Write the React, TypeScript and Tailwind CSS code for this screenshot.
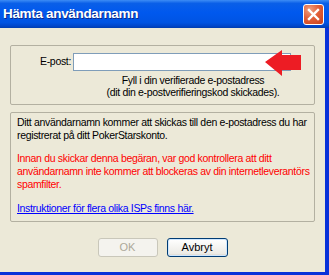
import React from 'react';

const font = { fontFamily: '"Liberation Sans", Arial, sans-serif' };

const TitleBar: React.FC = () => (
  <div className="relative flex h-[28px] items-center bg-[linear-gradient(to_bottom,#3d8cf5_0%,#0a5fe8_12%,#0058ee_45%,#0054e3_80%,#0047cc_92%,#003db0_100%)] pl-[3px] pr-[5px]">
    <span className="flex-1 text-[13.5px] font-bold text-white [text-shadow:1px_1px_0_#0d2a8a]">
      Hämta användarnamn
    </span>
    <button
      className="flex h-[21px] w-[21px] items-center justify-center rounded-[3px] border border-white bg-[radial-gradient(circle_at_30%_25%,#f0a080_0%,#e2603a_45%,#c8401a_100%)]"
      aria-label="Stäng"
    >
      <svg width="13" height="13" viewBox="0 0 13 13">
        <path d="M2 2 L11 11 M11 2 L2 11" stroke="white" strokeWidth="2.4" strokeLinecap="square" />
      </svg>
    </button>
  </div>
);

export default function App() {
  return (
    <div className="relative h-[275px] w-[329px] overflow-hidden bg-[#0831d9] text-[10.5px] tracking-[-0.33px] text-black" style={font}>
      <TitleBar />
      <div className="h-[244px] w-[325px] bg-[#ece9d8]">
        <div className="px-[10px] pt-[17px]">
          {/* E-post group */}
          <div className="h-[60px] w-[305px] rounded-[2px] border border-[#b3b0a1]">
            <div className="mt-[7px] flex items-center">
              <label className="w-[60px] text-right">E-post:</label>
              <input className="ml-[2px] h-[18px] w-[218px] border border-[#7f9db9] bg-white outline-none" />
            </div>
            <div className="ml-[66px] mt-[3px] w-[232px] text-center leading-[12px] whitespace-nowrap">
              <div>Fyll i din verifierade e-postadress</div>
              <div>(dit din e-postverifieringskod skickades).</div>
            </div>
          </div>

          {/* Info group */}
          <div className="mt-[7px] h-[110px] w-[305px] rounded-[2px] border border-[#b3b0a1] pl-[6px] pt-[3px] leading-[13px] whitespace-nowrap">
            <p>
              Ditt användarnamn kommer att skickas till den e-postadress du har
              <br />
              registrerat på ditt PokerStarskonto.
            </p>
            <p className="mt-[10px] text-[#ff0000]">
              Innan du skickar denna begäran, var god kontrollera att ditt
              <br />
              användarnamn inte kommer att blockeras av din internetleverantörs
              <br />
              spamfilter.
            </p>
            <p className="mt-[11px]">
              <a href="#" className="text-[#0000ff] underline">
                Instruktioner för flera olika ISPs finns här.
              </a>
            </p>
          </div>
        </div>

        <div className="mt-[16px] flex justify-center gap-[9px] text-[11px] tracking-normal">
          <button
            disabled
            className="h-[19px] w-[60px] rounded-[3px] border border-[#c9c7ba] bg-[#f4f3ee] text-[#aca899]"
          >
            OK
          </button>
          <button className="h-[19px] w-[61px] rounded-[3px] border border-[#003c74] bg-[linear-gradient(to_bottom,#ffffff,#ecebe6_85%,#d6d0c5)] shadow-[inset_0_0_0_1px_#cee7ff]">
            Avbryt
          </button>
        </div>
      </div>

      {/* red arrow overlay */}
      <svg className="absolute left-[264px] top-[49px]" width="38" height="28" viewBox="0 0 38 28">
        <path d="M1 13 L18 1 L18 6 L37 6 L37 21 L18 21 L18 27 Z" fill="#ed1c24" />
      </svg>
    </div>
  );
}
